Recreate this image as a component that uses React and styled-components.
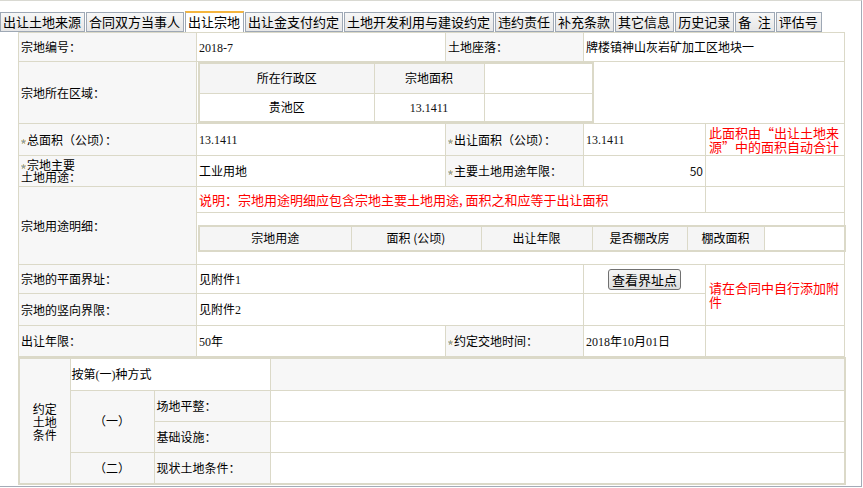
import React from "react";
import styled, { createGlobalStyle } from "styled-components";

const GlobalStyle = createGlobalStyle`
  html, body { margin: 0; padding: 0; background: #fff; }
  body {
    font-family: "Noto Sans CJK SC", "Noto Sans", sans-serif;
    font-size: 12px;
    color: #000;
  }
  * { box-sizing: border-box; }
`;

const LINE = "#dbd9c8";

const Frame = styled.div`
  width: 862px;
  height: 487px;
  border-top: 1px solid #d9d9d2;
  border-right: 1px solid #a3abb7;
  border-bottom: 1px solid #a3abb7;
  overflow: hidden;
  background: #fff;
`;

const TabBar = styled.div`
  display: flex;
  align-items: flex-end;
  gap: 1px;
  height: 31px;
`;

const Tab = styled.div`
  height: ${(p) => (p.$active ? "21px" : "20px")};
  padding: 0 3px 0 2px;
  border: 1px solid #9ea8b5;
  border-top: ${(p) => (p.$active ? "2px solid #f4b53f" : "1px solid #9ea8b5")};
  border-bottom: ${(p) => (p.$active ? "none" : "1px solid #9ea8b5")};
  background: ${(p) =>
    p.$active ? "#fff" : "linear-gradient(#f7f7f7, #e6e6e6)"};
  font-size: 13px;
  line-height: 18px;
  white-space: pre;
  color: #000;
`;

const Content = styled.div`
  padding-left: 18px;
`;

const MainTable = styled.table`
  width: 826px;
  border-collapse: collapse;
  table-layout: fixed;
  border: 1px solid ${LINE};
`;

const CondTable = styled.table`
  width: 826px;
  border-collapse: collapse;
  table-layout: fixed;
  border: 2px solid ${LINE};
`;

const Row = styled.tr`
  height: ${(p) => p.$h}px;
`;

const Cell = styled.td`
  border: 1px solid ${LINE};
  padding: ${(p) => p.$pad || "0 2px"};
  background: ${(p) => (p.$gray ? "#f7f7f7" : "#fff")};
  text-align: ${(p) => p.$align || "left"};
  vertical-align: ${(p) => p.$valign || "middle"};
  font-size: 12px;
  line-height: ${(p) => p.$lh || "14px"};
  white-space: nowrap;
`;

const Value = styled.span`
  font-family: ${(p) =>
    p.$sans
      ? '"Noto Sans CJK SC", sans-serif'
      : '"Liberation Serif", "Noto Sans CJK SC", serif'};
  font-size: 12px;
  color: #111;
`;

const Note = styled.div`
  color: #f00;
  font-size: 13px;
  line-height: 14px;
  white-space: normal;
  padding-left: 1px;
`;

const RedLine = styled.span`
  color: #f00;
  font-size: 13px;
`;

const SubTable = styled.table`
  width: ${(p) => p.$w}px;
  border-collapse: collapse;
  table-layout: fixed;
  border: 2px solid ${LINE};
`;

const SubRow = styled.tr`
  height: ${(p) => p.$h}px;
`;

const SubCell = styled.td`
  border: 1px solid ${LINE};
  background: ${(p) => (p.$gray ? "#f5f5f5" : "#fff")};
  text-align: center;
  font-size: 12px;
  line-height: 14px;
  padding: 0;
`;

const Button = styled.button`
  height: 21px;
  padding: 0 3px;
  font-family: "Noto Sans CJK SC", sans-serif;
  font-size: 13px;
  line-height: 17px;
  color: #000;
  border: 1px solid #707070;
  border-radius: 3px;
  background: linear-gradient(#f6f6f6, #dedede);
`;

const Star = () => (
  <svg width="5" height="5" viewBox="0 0 10 10" style={{ marginRight: 1, verticalAlign: 1 }}>
    <path
      d="M5 0 L6.2 3.6 L10 3.6 L6.9 5.9 L8.1 9.6 L5 7.3 L1.9 9.6 L3.1 5.9 L0 3.6 L3.8 3.6 Z"
      fill="#7c9cc4"
      stroke="#c9a845"
      strokeWidth="0.8"
    />
  </svg>
);

const tabs = [
  "出让土地来源",
  "合同双方当事人",
  "出让宗地",
  "出让金支付约定",
  "土地开发利用与建设约定",
  "违约责任",
  "补充条款",
  "其它信息",
  "历史记录",
  "备\u2002注",
  "评估号",
];

export default function App() {
  return (
    <>
      <GlobalStyle />
      <Frame>
        <TabBar>
          {tabs.map((t) => (
            <Tab key={t} $active={t === "出让宗地"}>
              {t}
            </Tab>
          ))}
        </TabBar>
        <Content>
          <MainTable>
            <colgroup>
              <col style={{ width: 178 }} />
              <col style={{ width: 249 }} />
              <col style={{ width: 138 }} />
              <col style={{ width: 122 }} />
              <col style={{ width: 139 }} />
            </colgroup>
            <tbody>
              <Row $h={29}>
                <Cell $gray>宗地编号：</Cell>
                <Cell><Value>2018-7</Value></Cell>
                <Cell $gray>土地座落：</Cell>
                <Cell colSpan={2}>牌楼镇神山灰岩矿加工区地块一</Cell>
              </Row>
              <Row $h={62}>
                <Cell $gray>宗地所在区域：</Cell>
                <Cell colSpan={4} $pad="0 1px">
                  <SubTable $w={394}>
                    <colgroup>
                      <col style={{ width: 175 }} />
                      <col style={{ width: 110 }} />
                      <col style={{ width: 109 }} />
                    </colgroup>
                    <tbody>
                      <SubRow $h={30}>
                        <SubCell $gray>所在行政区</SubCell>
                        <SubCell $gray>宗地面积</SubCell>
                        <SubCell />
                      </SubRow>
                      <SubRow $h={29}>
                        <SubCell>贵池区</SubCell>
                        <SubCell><Value>13.1411</Value></SubCell>
                        <SubCell />
                      </SubRow>
                    </tbody>
                  </SubTable>
                </Cell>
              </Row>
              <Row $h={32}>
                <Cell $gray><Star />总面积（公顷）：</Cell>
                <Cell><Value>13.1411</Value></Cell>
                <Cell $gray><Star />出让面积（公顷）：</Cell>
                <Cell><Value>13.1411</Value></Cell>
                <Cell>
                  <Note>此面积由“出让土地来源”中的面积自动合计</Note>
                </Cell>
              </Row>
              <Row $h={31}>
                <Cell $gray $lh="12px"><Star />宗地主要<br />土地用途：</Cell>
                <Cell>工业用地</Cell>
                <Cell $gray><Star />主要土地用途年限：</Cell>
                <Cell $align="right"><Value $sans>50</Value></Cell>
                <Cell />
              </Row>
              <Row $h={26}>
                <Cell $gray rowSpan={2}>宗地用途明细：</Cell>
                <Cell colSpan={3}>
                  <RedLine>说明：宗地用途明细应包含宗地主要土地用途, 面积之和应等于出让面积</RedLine>
                </Cell>
                <Cell />
              </Row>
              <Row $h={52}>
                <Cell colSpan={4} $pad="11px 0 12px 1px">
                  <SubTable $w={646}>
                    <colgroup>
                      <col style={{ width: 152 }} />
                      <col style={{ width: 130 }} />
                      <col style={{ width: 111 }} />
                      <col style={{ width: 95 }} />
                      <col style={{ width: 77 }} />
                      <col style={{ width: 81 }} />
                    </colgroup>
                    <tbody>
                      <SubRow $h={25}>
                        <SubCell $gray>宗地用途</SubCell>
                        <SubCell $gray>面积 (公顷)</SubCell>
                        <SubCell $gray>出让年限</SubCell>
                        <SubCell $gray>是否棚改房</SubCell>
                        <SubCell $gray>棚改面积</SubCell>
                        <SubCell />
                      </SubRow>
                    </tbody>
                  </SubTable>
                </Cell>
              </Row>
              <Row $h={29}>
                <Cell $gray>宗地的平面界址：</Cell>
                <Cell colSpan={2}>见附件<Value>1</Value></Cell>
                <Cell $align="center"><Button type="button">查看界址点</Button></Cell>
                <Cell rowSpan={2}>
                  <Note>请在合同中自行添加附件</Note>
                </Cell>
              </Row>
              <Row $h={32}>
                <Cell $gray>宗地的竖向界限：</Cell>
                <Cell colSpan={2}>见附件<Value>2</Value></Cell>
                <Cell />
              </Row>
              <Row $h={31}>
                <Cell $gray>出让年限：</Cell>
                <Cell><Value>50</Value>年</Cell>
                <Cell $gray><Star />约定交地时间：</Cell>
                <Cell><Value>2018</Value>年<Value>10</Value>月<Value>01</Value>日</Cell>
                <Cell />
              </Row>
            </tbody>
          </MainTable>
          <CondTable>
            <colgroup>
              <col style={{ width: 51 }} />
              <col style={{ width: 84 }} />
              <col style={{ width: 116 }} />
              <col style={{ width: 575 }} />
            </colgroup>
            <tbody>
              <Row $h={32}>
                <Cell $gray rowSpan={4} $align="center" $lh="13px">
                  约定<br />土地<br />条件
                </Cell>
                <Cell colSpan={2} $pad="0 1px">按第<Value>(</Value>一<Value>)</Value>种方式</Cell>
                <Cell $gray />
              </Row>
              <Row $h={31}>
                <Cell $gray rowSpan={2} $align="center">（一）</Cell>
                <Cell $gray>场地平整：</Cell>
                <Cell />
              </Row>
              <Row $h={31}>
                <Cell $gray>基础设施：</Cell>
                <Cell />
              </Row>
              <Row $h={32}>
                <Cell $gray $align="center">（二）</Cell>
                <Cell $gray>现状土地条件：</Cell>
                <Cell />
              </Row>
            </tbody>
          </CondTable>
        </Content>
      </Frame>
    </>
  );
}
